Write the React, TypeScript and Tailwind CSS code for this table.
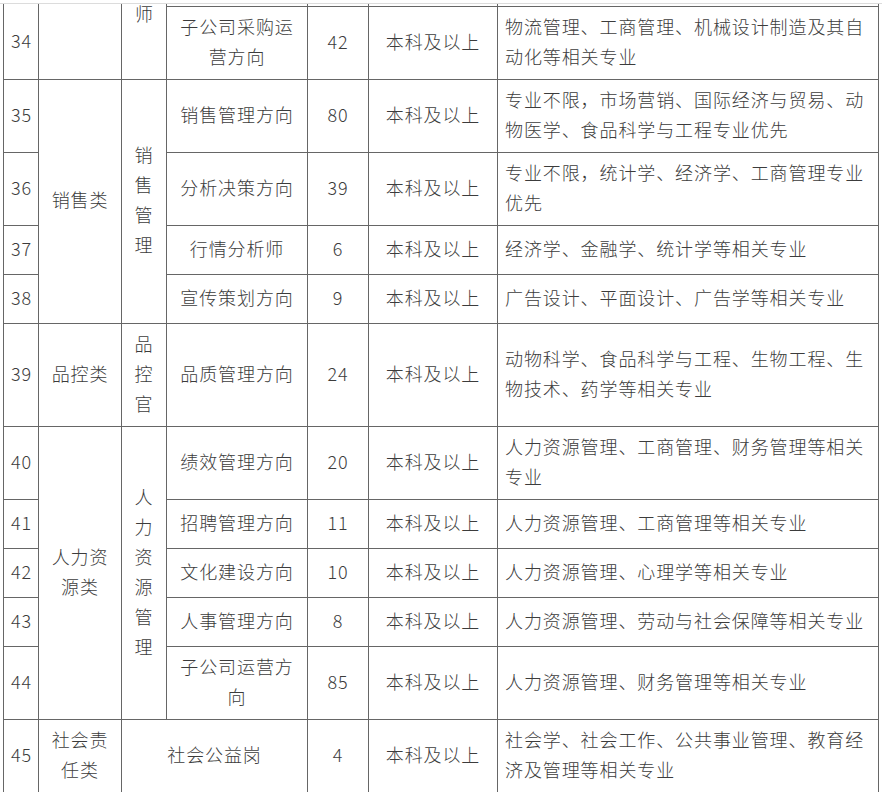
import React from "react";

type Row = {
  no: number;
  pos: string;
  num: number;
  desc: string;
  h: string;
};

const rows: Row[] = [
  { no: 34, pos: "子公司采购运营方向", num: 42, desc: "物流管理、工商管理、机械设计制造及其自动化等相关专业", h: "h-[73px]" },
  { no: 35, pos: "销售管理方向", num: 80, desc: "专业不限，市场营销、国际经济与贸易、动物医学、食品科学与工程专业优先", h: "h-[73px]" },
  { no: 36, pos: "分析决策方向", num: 39, desc: "专业不限，统计学、经济学、工商管理专业优先", h: "h-[73px]" },
  { no: 37, pos: "行情分析师", num: 6, desc: "经济学、金融学、统计学等相关专业", h: "h-[49px]" },
  { no: 38, pos: "宣传策划方向", num: 9, desc: "广告设计、平面设计、广告学等相关专业", h: "h-[49px]" },
  { no: 39, pos: "品质管理方向", num: 24, desc: "动物科学、食品科学与工程、生物工程、生物技术、药学等相关专业", h: "h-[103px]" },
  { no: 40, pos: "绩效管理方向", num: 20, desc: "人力资源管理、工商管理、财务管理等相关专业", h: "h-[73px]" },
  { no: 41, pos: "招聘管理方向", num: 11, desc: "人力资源管理、工商管理等相关专业", h: "h-[49px]" },
  { no: 42, pos: "文化建设方向", num: 10, desc: "人力资源管理、心理学等相关专业", h: "h-[49px]" },
  { no: 43, pos: "人事管理方向", num: 8, desc: "人力资源管理、劳动与社会保障等相关专业", h: "h-[49px]" },
  { no: 44, pos: "子公司运营方向", num: 85, desc: "人力资源管理、财务管理等相关专业", h: "h-[73px]" },
];

// 分组（类别 + 岗位群），key 为起始行号
const groups: Record<number, { cat: string; sub: string; span: number }> = {
  35: { cat: "销售类", sub: "销售管理", span: 4 },
  39: { cat: "品控类", sub: "品控官", span: 1 },
  40: { cat: "人力资源类", sub: "人力资源管理", span: 5 },
};

const cell = "border border-[#666] px-[7px] pt-0 pb-[4px] text-center align-middle";
const descCell = "border border-[#666] pl-[7px] pr-[5px] pt-0 pb-[4px] text-left align-middle";

export default function App() {
  return (
    <div className="w-[882px] h-[792px] overflow-hidden bg-white pt-[3px] font-['Noto_Sans_CJK_SC',sans-serif] font-light text-[18px] leading-[30px] tracking-[0.9px] text-[#3c3c3c]">
      <div className="h-px bg-[#dcdcdc]" />
      <table className="ml-[3px] w-[875px] table-fixed border-collapse">
        <colgroup>
          <col className="w-[35px]" />
          <col className="w-[83px]" />
          <col className="w-[45px]" />
          <col className="w-[141px]" />
          <col className="w-[61px]" />
          <col className="w-[129px]" />
          <col className="w-[381px]" />
        </colgroup>
        <tbody>
          {/* 上一组的尾巴 */}
          <tr className="h-[2px]">
            <td className="border-x border-[#666] p-0" />
            <td rowSpan={2} className="border-x border-b border-[#666] p-0" />
            <td rowSpan={2} className="border-x border-b border-[#666] p-0 align-top text-center">
              <div className="leading-[18px] tracking-normal">师</div>
            </td>
            <td className="border-x border-[#666] p-0" />
            <td className="border-x border-[#666] p-0" />
            <td className="border-x border-[#666] p-0" />
            <td className="border-x border-[#666] p-0" />
          </tr>

          {rows.map((r) => {
            const g = groups[r.no];
            const first = r.no === 34;
            return (
              <tr key={r.no} className={r.h}>
                <td className={`${cell} ${first ? "border-t-0" : ""}`}>{r.no}</td>
                {g && (
                  <>
                    <td rowSpan={g.span} className={cell}>
                      {g.cat}
                    </td>
                    <td rowSpan={g.span} className={cell}>
                      {g.sub}
                    </td>
                  </>
                )}
                <td className={cell}>{r.pos}</td>
                <td className={cell}>{r.num}</td>
                <td className={cell}>本科及以上</td>
                <td className={descCell}>{r.desc}</td>
              </tr>
            );
          })}

          <tr className="h-[73px]">
            <td className={cell}>45</td>
            <td className={cell}>社会责任类</td>
            <td colSpan={2} className={cell}>
              社会公益岗
            </td>
            <td className={cell}>4</td>
            <td className={cell}>本科及以上</td>
            <td className={descCell}>社会学、社会工作、公共事业管理、教育经济及管理等相关专业</td>
          </tr>
        </tbody>
      </table>
    </div>
  );
}
